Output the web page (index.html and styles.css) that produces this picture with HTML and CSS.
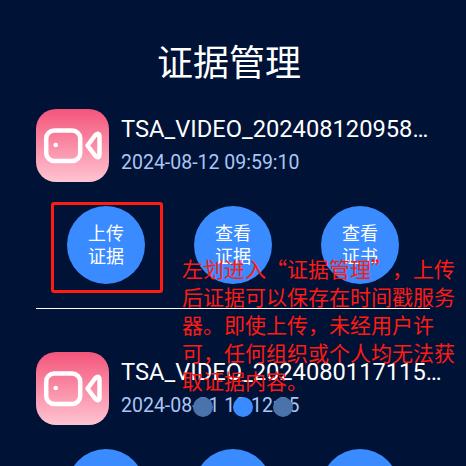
FILE: index.html
```html
<!DOCTYPE html>
<html lang="zh-CN">
<head>
<meta charset="utf-8">
<title>证据管理</title>
<link rel="stylesheet" href="styles.css">
</head>
<body>
<main class="screen">
  <h1 class="title">证据管理</h1>
  <section class="item">
    <div class="file">
      <svg class="thumb" viewBox="0 0 73 73" aria-hidden="true">
        <defs><linearGradient id="g1" x1="0" y1="0" x2="0" y2="1"><stop offset="0" stop-color="#f4557b"/><stop offset="1" stop-color="#ffc4d2"/></linearGradient></defs>
        <rect width="73" height="73" rx="20" fill="url(#g1)"/>
        <rect x="10.2" y="21.5" width="34" height="30.5" rx="8" fill="none" stroke="#fff" stroke-width="4.5"/>
        <path d="M51.5 36.5 L59 26.5 Q63.5 22.5 63.5 28 V45 Q63.5 50.5 59 46.5 Z" fill="none" stroke="#fff" stroke-width="4.5" stroke-linejoin="round"/>
        <circle cx="19.7" cy="36" r="2.3" fill="#fff"/>
      </svg>
      <div class="meta">
        <div class="name name-short">TSA_VIDEO_20240812095810.mp4</div>
        <div class="date">2024-08-12 09:59:10</div>
      </div>
    </div>
    <div class="actions">
      <button class="action"><span class="label">上传<br>证据</span></button>
      <button class="action"><span class="label">查看<br>证据</span></button>
      <button class="action"><span class="label">查看<br>证书</span></button>
    </div>
  </section>
  <section class="item second">
    <div class="file">
      <svg class="thumb" viewBox="0 0 73 73" aria-hidden="true">
        <rect width="73" height="73" rx="20" fill="url(#g1)"/>
        <rect x="10.2" y="21.5" width="34" height="30.5" rx="8" fill="none" stroke="#fff" stroke-width="4.5"/>
        <path d="M51.5 36.5 L59 26.5 Q63.5 22.5 63.5 28 V45 Q63.5 50.5 59 46.5 Z" fill="none" stroke="#fff" stroke-width="4.5" stroke-linejoin="round"/>
        <circle cx="19.7" cy="36" r="2.3" fill="#fff"/>
      </svg>
      <div class="meta">
        <div class="name">TSA_VIDEO_20240801171155.mp4</div>
        <div class="date">2024-08-01 10:12:05</div>
      </div>
    </div>
    <div class="actions">
      <button class="action"><span class="label">上传<br>证据</span></button>
      <button class="action"><span class="label">查看<br>证据</span></button>
      <button class="action"><span class="label">查看<br>证书</span></button>
    </div>
  </section>
  <div class="highlight"></div>
  <div class="dots"><span class="dot"></span><span class="dot on"></span><span class="dot"></span></div>
  <p class="note">左划进入“证据管理”，上传后证据可以保存在时间戳服务器。即使上传，未经用户许可，任何组织或个人均无法获取证据内容。</p>
</main>
</body>
</html>
```
FILE: styles.css
```css
* { box-sizing: border-box; }
html, body { margin: 0; padding: 0; }
body { background: #001236; }
.screen {
  position: relative;
  width: 466px;
  height: 466px;
  overflow: hidden;
  background: #001236;
  font-family: Roboto, "Noto Sans CJK SC", sans-serif;
  color: #fff;
}
.title {
  margin: 0;
  padding: 37px 0 0;
  width: 458px;
  height: 109px;
  text-align: center;
  font-size: 36px;
  line-height: 46px;
  font-weight: 400;
  font-family: "Noto Sans CJK SC", sans-serif;
}
.item {
  margin: 0 36px;
  width: 394px;
  height: 200px;
  border-bottom: 1px solid #fff;
}
.second { margin-top: 43px; border-bottom: 0; }
.file { display: flex; align-items: center; gap: 12px; }
.thumb { width: 73px; height: 73px; flex: none; display: block; }
.meta { min-width: 0; display: flex; flex-direction: column; gap: 5px; margin-top: -2px; }
.name {
  width: 322px;
  font-size: 23.7px;
  line-height: 32px;
  white-space: nowrap;
  overflow: hidden;
  text-overflow: ellipsis;
}
.name-short { width: 310px; }
.date {
  font-size: 19.5px;
  line-height: 26px;
  color: #a9c6f5;
}
.actions {
  display: flex;
  gap: 49px;
  padding: 24px 0 0 31px;
}
.action {
  width: 78px;
  height: 78px;
  flex: none;
  padding: 0 0 2px;
  border: 0;
  border-radius: 50%;
  background: #3a8bff;
  color: #fff;
  font-family: "Noto Sans CJK SC", sans-serif;
  font-size: 18px;
  line-height: 23px;
}
.label { display: block; }
.highlight {
  position: absolute;
  left: 51px;
  top: 201.5px;
  width: 112px;
  height: 91.5px;
  border: 3px solid #ff1a12;
  border-radius: 3px;
}
.dots {
  position: absolute;
  left: 193px;
  top: 397px;
  display: flex;
  gap: 20px;
}
.dot {
  width: 20px;
  height: 20px;
  border-radius: 50%;
  background: #4a72ab;
}
.dot.on { background: #3a8bff; }
.note {
  position: absolute;
  left: 182px;
  top: 254px;
  width: 275px;
  margin: 0;
  font-family: "Noto Sans CJK SC", sans-serif;
  font-size: 21px;
  line-height: 28px;
  color: #ff1a12;
  text-spacing-trim: space-all;
}
```
